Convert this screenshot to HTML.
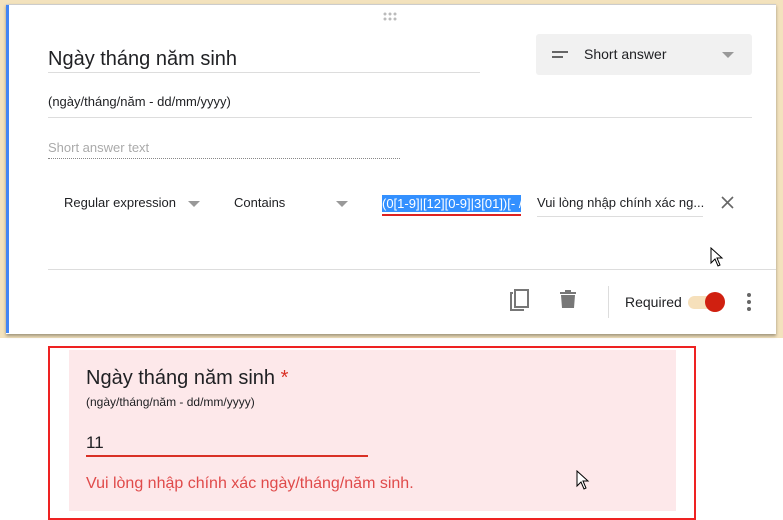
<!DOCTYPE html>
<html><head><meta charset="utf-8"><style>
*{margin:0;padding:0;box-sizing:border-box}
body{width:783px;height:520px;background:#fff;position:relative;overflow:hidden;font-family:"Liberation Sans",Arial,sans-serif;color:#202124}
.a{position:absolute}
</style></head><body>
<div class="a" style="left:0;top:0;width:783px;height:338px;background:#f3e2bd"></div>
<div class="a" style="left:6px;top:4px;width:770px;height:330px;background:#fff;border-top:1px solid #ccc;box-shadow:0 2px 3px rgba(0,0,0,.35)"></div>
<div class="a" style="left:6px;top:5px;width:3px;height:328px;background:#4285f4"></div>
<svg class="a" style="left:383px;top:12px" width="16" height="10"><g fill="#bbb"><circle cx="2" cy="2" r="1.5"/><circle cx="7" cy="2" r="1.5"/><circle cx="12" cy="2" r="1.5"/><circle cx="2" cy="7" r="1.5"/><circle cx="7" cy="7" r="1.5"/><circle cx="12" cy="7" r="1.5"/></g></svg>
<div class="a" style="left:48px;top:48px;font-size:20px">Ngày tháng năm sinh</div>
<div class="a" style="left:48px;top:72px;width:432px;height:1px;background:#ddd"></div>
<div class="a" style="left:536px;top:34px;width:216px;height:41px;background:#f1f1f1;border-radius:3px"></div>
<div class="a" style="left:552px;top:51px;width:16px;height:2px;background:#666"></div>
<div class="a" style="left:552px;top:56px;width:11px;height:2px;background:#666"></div>
<div class="a" style="left:584px;top:46px;font-size:14px">Short answer</div>
<div class="a" style="left:722px;top:52px;width:0;height:0;border-left:6px solid transparent;border-right:6px solid transparent;border-top:6px solid #999"></div>
<div class="a" style="left:48px;top:94px;font-size:13px">(ngày/tháng/năm - dd/mm/yyyy)</div>
<div class="a" style="left:48px;top:117px;width:704px;height:1px;background:#ddd"></div>
<div class="a" style="left:48px;top:140px;font-size:13px;color:#aaa">Short answer text</div>
<div class="a" style="left:48px;top:158px;width:352px;border-top:1px dotted #888"></div>
<div class="a" style="left:64px;top:195px;font-size:13px">Regular expression</div>
<div class="a" style="left:188px;top:201px;border-left:6px solid transparent;border-right:6px solid transparent;border-top:6px solid #999"></div>
<div class="a" style="left:234px;top:195px;font-size:13px">Contains</div>
<div class="a" style="left:336px;top:201px;border-left:6px solid transparent;border-right:6px solid transparent;border-top:6px solid #999"></div>
<div class="a" style="left:382px;top:195px;width:139px;height:17px;background:#3390ff;color:#fff;font-size:13px;overflow:hidden;white-space:nowrap;line-height:17px">(0[1-9]|[12][0-9]|3[01])[- /</div>
<div class="a" style="left:382px;top:214px;width:139px;height:2px;background:#d22"></div>
<div class="a" style="left:537px;top:195px;font-size:13px;white-space:nowrap">Vui lòng nhập chính xác ng...</div>
<div class="a" style="left:537px;top:216px;width:166px;height:1px;background:#ddd"></div>
<svg class="a" style="left:721px;top:196px" width="13" height="13"><path d="M1 1L12 12M12 1L1 12" stroke="#666" stroke-width="1.6"/></svg>
<svg class="a" style="left:710px;top:247px" width="14" height="20"><path d="M1 1V16L5 12L8 19L10 18L7 11H12Z" fill="#fff" stroke="#000"/></svg>
<div class="a" style="left:48px;top:269px;width:728px;height:1px;background:#ddd"></div>
<svg class="a" style="left:509px;top:288px" width="22" height="24"><path d="M4 5H2V22H15" fill="none" stroke="#777" stroke-width="2"/><rect x="6" y="2" width="13" height="17" fill="none" stroke="#777" stroke-width="2"/></svg>
<svg class="a" style="left:559px;top:289px" width="18" height="20"><path d="M1 3H17V5H1Z M6 1H12V3H6Z M2 6H16L15 19H3Z" fill="#777"/></svg>
<div class="a" style="left:608px;top:286px;width:1px;height:32px;background:#ddd"></div>
<div class="a" style="left:625px;top:294px;font-size:14px">Required</div>
<div class="a" style="left:688px;top:296px;width:32px;height:13px;border-radius:7px;background:#f6e0bb"></div>
<div class="a" style="left:705px;top:292px;width:20px;height:20px;border-radius:50%;background:#d02010"></div>
<svg class="a" style="left:746px;top:292px" width="6" height="20"><g fill="#666"><circle cx="3" cy="3" r="2"/><circle cx="3" cy="10" r="2"/><circle cx="3" cy="17" r="2"/></g></svg>
<div class="a" style="left:48px;top:346px;width:648px;height:174px;border:2px solid #e22"></div>
<div class="a" style="left:69px;top:350px;width:607px;height:161px;background:#fde8ea"></div>
<div class="a" style="left:86px;top:367px;font-size:20px">Ngày tháng năm sinh <span style="color:#d93025">*</span></div>
<div class="a" style="left:86px;top:395px;font-size:12px">(ngày/tháng/năm - dd/mm/yyyy)</div>
<div class="a" style="left:86px;top:433px;font-size:17px">11</div>
<div class="a" style="left:86px;top:455px;width:282px;height:2px;background:#d93025"></div>
<div class="a" style="left:86px;top:475px;font-size:16px;color:#e04a4a">Vui lòng nhập chính xác ngày/tháng/năm sinh.</div>
<svg class="a" style="left:576px;top:470px" width="14" height="20"><path d="M1 1V16L5 12L8 19L10 18L7 11H12Z" fill="#fff" stroke="#000"/></svg>
</body></html>
